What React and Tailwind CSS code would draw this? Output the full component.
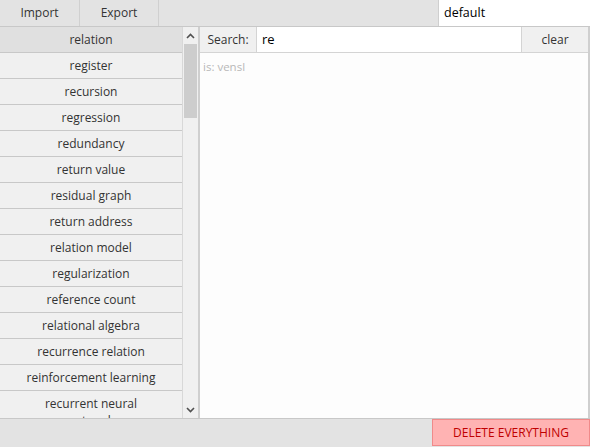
import React from "react";

const items = [
  "relation",
  "register",
  "recursion",
  "regression",
  "redundancy",
  "return value",
  "residual graph",
  "return address",
  "relation model",
  "regularization",
  "reference count",
  "relational algebra",
  "recurrence relation",
  "reinforcement learning",
  "recurrent neural network",
];

function Chevron({ up }) {
  return (
    <svg width="9" height="6" viewBox="0 0 9 6" className="block">
      <path
        d={up ? "M1 5 L4.5 1.5 L8 5" : "M1 1 L4.5 4.5 L8 1"}
        fill="none"
        stroke="#505050"
        strokeWidth="1.6"
      />
    </svg>
  );
}

export default function App() {
  return (
    <div
      className="w-[590px] h-[447px] flex flex-col bg-[#e3e3e3] text-[12px] text-[#333] overflow-hidden"
      style={{ fontFamily: '"Open Sans", "Noto Sans", sans-serif' }}
    >
      {/* top bar */}
      <div className="h-[27px] flex border-b border-[#c8c8c8] shrink-0">
        <div className="w-[80px] flex items-center justify-center border-r border-[#d0d0d0]">Import</div>
        <div className="w-[79px] flex items-center justify-center border-r border-[#d0d0d0]">Export</div>
        <div className="flex-1" />
        <div className="w-[152px] bg-white border-l border-[#cfcfcf] flex items-center pl-[5px] text-[12.5px] text-black">
          default
        </div>
      </div>

      {/* main */}
      <div className="flex-1 flex min-h-0 border-b border-[#c8c8c8]">
        {/* list */}
        <div className="w-[183px] flex flex-col overflow-hidden bg-[#f0f0f0] border-r border-[#d8d8d8]">
          {items.map((t, i) => (
            <div
              key={t}
              className={`shrink-0 text-center leading-[17px] pt-[4px] pb-[4px] px-[22px] border-b border-[#c8c8c8] ${
                i === 0 ? "bg-[#e0e0e0]" : ""
              }`}
            >
              {t}
            </div>
          ))}
        </div>
        {/* scrollbar */}
        <div className="w-[17px] bg-[#f0f0f0] flex flex-col border-r-2 border-[#cfcfcf]">
          <div className="h-[17px] flex items-center justify-center">
            <Chevron up />
          </div>
          <div className="h-[74px] bg-[#cdcdcd] mx-[1px]" />
          <div className="flex-1" />
          <div className="h-[17px] flex items-center justify-center">
            <Chevron />
          </div>
        </div>
        {/* right panel */}
        <div className="flex-1 flex flex-col bg-[#fdfdfd] border-r-2 border-[#cfcfcf]">
          <div className="h-[26px] flex border-b border-[#d4d4d4] shrink-0">
            <div className="w-[57px] bg-[#f0f0f0] border-r border-[#d4d4d4] flex items-center justify-center">
              Search:
            </div>
            <div className="flex-1 bg-white flex items-center pl-[5px] text-[13px] text-black">re</div>
            <div className="w-[67px] bg-[#f0f0f0] border-l border-[#d4d4d4] flex items-center justify-center">
              clear
            </div>
          </div>
          <div className="pl-[3px] pt-[5px] text-[11.5px] text-[#b8b8b8]">is: vensl</div>
        </div>
      </div>

      {/* bottom bar */}
      <div className="h-[28px] flex shrink-0 pb-[1px]">
        <div className="flex-1" />
        <div className="w-[158px] bg-[#ffb3b3] border border-[#f08a8a] flex items-center justify-center text-[#c00000] text-[12px]">
          DELETE EVERYTHING
        </div>
      </div>
    </div>
  );
}
